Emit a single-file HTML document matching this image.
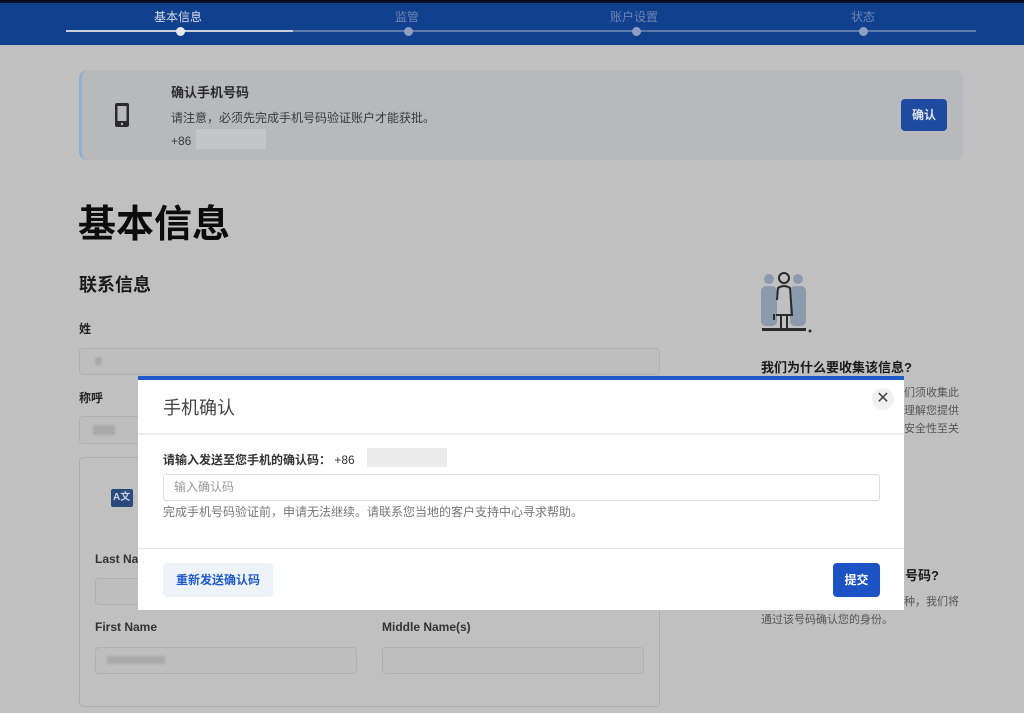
<!DOCTYPE html>
<html><head><meta charset="utf-8"><style>
*{margin:0;padding:0;box-sizing:border-box}
body{width:1024px;height:713px;overflow:hidden;background:#c0c0c0;font-family:"Liberation Sans","Noto Sans CJK SC",sans-serif;color:#222;position:relative}
.a{position:absolute;white-space:nowrap}
.inp{position:absolute;border:1px solid #b0b0b0;border-radius:4px;background:#bebebe}
.blur{position:absolute;background:#a9a9a9;height:8px;border-radius:2px;filter:blur(1px)}
</style></head><body>
<div class="a" style="left:0;top:0;width:1024px;height:45px;background:#11408f;border-top:3px solid #050d24"></div>
<div class="a" style="left:66px;top:30px;width:910px;height:2px;background:#5c77a8"></div>
<div class="a" style="left:66px;top:30px;width:227px;height:2px;background:#c8cfdc"></div>
<div class="a" style="left:176px;top:27px;width:9px;height:9px;border-radius:50%;background:#e6e8ee"></div>
<div class="a" style="left:404px;top:27px;width:9px;height:9px;border-radius:50%;background:#8da0c4"></div>
<div class="a" style="left:632px;top:27px;width:9px;height:9px;border-radius:50%;background:#8da0c4"></div>
<div class="a" style="left:859px;top:27px;width:9px;height:9px;border-radius:50%;background:#8da0c4"></div>
<div class="a" style="left:154px;top:8px;font-size:12px;color:#d8dce6">基本信息</div>
<div class="a" style="left:395px;top:8px;font-size:12px;color:#6f84b0">监管</div>
<div class="a" style="left:610px;top:8px;font-size:12px;color:#6f84b0">账户设置</div>
<div class="a" style="left:851px;top:8px;font-size:12px;color:#6f84b0">状态</div>

<div class="a" style="left:79px;top:70px;width:884px;height:90px;background:#b7b9bd;border-radius:8px;border-left:3px solid #8fb0d0"></div>
<svg class="a" style="left:113px;top:101px" width="18" height="28" viewBox="0 0 18 28"><rect x="2" y="2" width="14" height="24" rx="2" fill="#2a2a2a"/><rect x="4.5" y="5" width="9" height="15" fill="#b7b9bd"/><circle cx="9" cy="23" r="1.2" fill="#b7b9bd"/></svg>
<div class="a" style="left:171px;top:82px;font-size:13px;font-weight:bold;color:#2a2a2a">确认手机号码</div>
<div class="a" style="left:171px;top:109px;font-size:12px;color:#3a3a3a">请注意，必须先完成手机号码验证账户才能获批。</div>
<div class="a" style="left:171px;top:134px;font-size:12px;color:#3a3a3a">+86</div>
<div class="a" style="left:196px;top:129px;width:70px;height:20px;background:#c3c5c8"></div>
<div class="a" style="left:901px;top:99px;width:46px;height:32px;background:#1e4aa0;border-radius:4px;color:#dfe4ef;font-size:12px;font-weight:bold;text-align:center;line-height:32px">确认</div>

<div class="a" style="left:78px;top:193px;font-size:38px;font-weight:bold;color:#0c0c0c">基本信息</div>
<div class="a" style="left:79px;top:271px;font-size:18px;font-weight:bold;color:#1a1a1a">联系信息</div>
<div class="a" style="left:79px;top:320px;font-size:12px;font-weight:bold">姓</div>
<div class="inp" style="left:79px;top:348px;width:581px;height:27px"></div>
<div class="blur" style="left:95px;top:357px;width:7px"></div>
<div class="a" style="left:79px;top:389px;font-size:12px;font-weight:bold">称呼</div>
<div class="inp" style="left:79px;top:416px;width:100px;height:28px"></div>
<div class="blur" style="left:93px;top:425px;width:22px;height:10px"></div>
<div class="a" style="left:79px;top:457px;width:581px;height:250px;border:1px solid #adadad;border-radius:4px"></div>
<div class="a" style="left:111px;top:489px;width:22px;height:18px;background:#2a4a7e;border-radius:2px;color:#d0d8e6;font-size:10px;font-weight:bold;line-height:18px;padding-left:2px">A文</div>
<div class="a" style="left:95px;top:552px;font-size:12px;font-weight:bold;color:#333">Last Name</div>
<div class="inp" style="left:95px;top:578px;width:262px;height:27px"></div>
<div class="a" style="left:95px;top:620px;font-size:12px;font-weight:bold;color:#333">First Name</div>
<div class="a" style="left:382px;top:620px;font-size:12px;font-weight:bold;color:#333">Middle Name(s)</div>
<div class="inp" style="left:95px;top:647px;width:262px;height:27px"></div>
<div class="blur" style="left:107px;top:656px;width:58px"></div>
<div class="inp" style="left:382px;top:647px;width:262px;height:27px"></div>

<svg class="a" style="left:760px;top:270px" width="54" height="66" viewBox="0 0 54 66"><circle cx="9" cy="9" r="5" fill="#8b9bae"/><circle cx="38" cy="9" r="5" fill="#8b9bae"/><rect x="1" y="16" width="16" height="40" rx="5" fill="#8b9bae"/><rect x="30" y="16" width="16" height="40" rx="5" fill="#8b9bae"/><circle cx="24" cy="8" r="5" fill="none" stroke="#2a2a2a" stroke-width="2"/><path d="M17 30 L18 18 Q24 14 30 18 L32 45 L16 45 M21 45 V58 M27 45 V58 M14 44 V50" fill="none" stroke="#2a2a2a" stroke-width="2"/><rect x="2" y="58" width="44" height="3" fill="#2a2a2a"/><circle cx="50" cy="61" r="1.5" fill="#2a2a2a"/></svg>
<div class="a" style="left:761px;top:357px;font-size:13px;font-weight:bold;color:#1a1a1a">我们为什么要收集该信息?</div>
<div class="a" style="left:904px;top:384px;font-size:11px;color:#555;line-height:18px">们须收集此<br>理解您提供<br>安全性至关</div>
<div class="a" style="left:905px;top:565px;font-size:13px;font-weight:bold;color:#1a1a1a">号码?</div>
<div class="a" style="left:904px;top:593px;font-size:11px;color:#555">种，我们将</div>
<div class="a" style="left:761px;top:611px;font-size:11px;color:#555">通过该号码确认您的身份。</div>

<div class="a" style="left:138px;top:376px;width:766px;height:234px;background:#fff;border-top:4px solid #1f5ac9"></div>
<div class="a" style="left:163px;top:394px;font-size:18px;color:#444">手机确认</div>
<div class="a" style="left:872px;top:388px;width:22px;height:22px;border-radius:50%;background:#f0f0f0;color:#444;font-size:16px;text-align:center;line-height:22px">✕</div>
<div class="a" style="left:138px;top:433px;width:766px;height:2px;background:#eee"></div>
<div class="a" style="left:163px;top:451px;font-size:12px;font-weight:bold;color:#333">请输入发送至您手机的确认码： <span style="font-weight:normal">+86</span></div>
<div class="a" style="left:367px;top:448px;width:80px;height:19px;background:#ececec"></div>
<div class="a" style="left:163px;top:474px;width:717px;height:27px;border:1px solid #ddd;border-radius:3px;font-size:12px;color:#999;line-height:25px;padding-left:10px">输入确认码</div>
<div class="a" style="left:163px;top:503px;font-size:12px;color:#777">完成手机号码验证前，申请无法继续。请联系您当地的客户支持中心寻求帮助。</div>
<div class="a" style="left:138px;top:548px;width:766px;height:1px;background:#e6e6e6"></div>
<div class="a" style="left:163px;top:563px;width:110px;height:34px;background:#eef3fa;border-radius:4px;color:#1f5ac9;font-size:12px;font-weight:bold;text-align:center;line-height:34px">重新发送确认码</div>
<div class="a" style="left:833px;top:563px;width:47px;height:34px;background:#1c52c4;border-radius:4px;color:#fff;font-size:12px;font-weight:bold;text-align:center;line-height:34px">提交</div>
</body></html>
